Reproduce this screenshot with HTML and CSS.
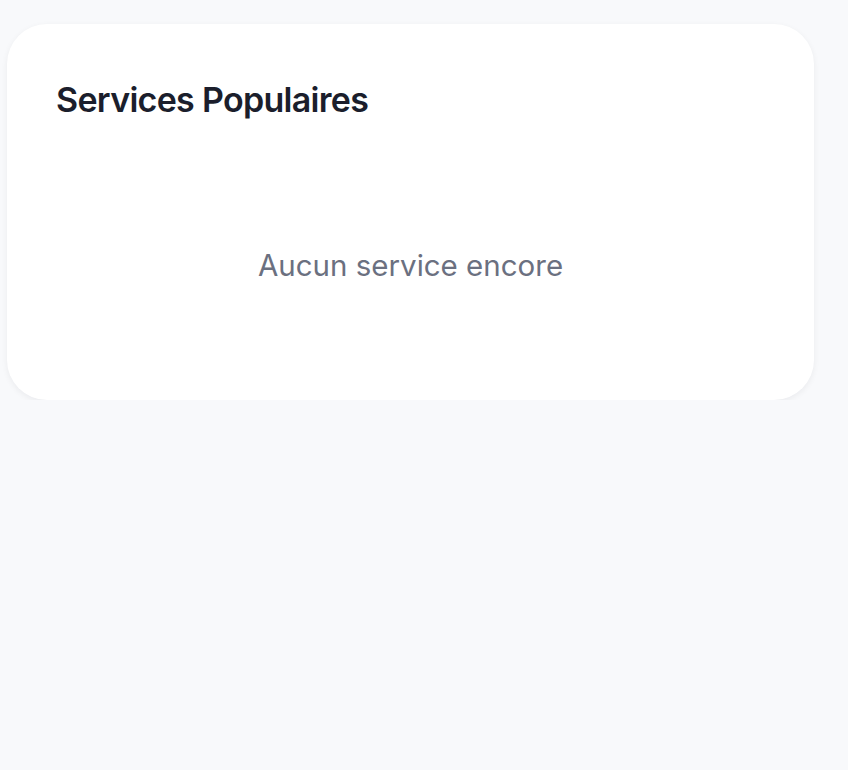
FILE: index.html
```html
<!DOCTYPE html>
<html lang="fr">
<head>
<meta charset="utf-8">
<link rel="stylesheet" href="styles.css">
</head>
<body>
<section class="card">
  <h2 class="card-title">Services Populaires</h2>
  <div class="empty">Aucun service encore</div>
</section>
</body>
</html>
```
FILE: styles.css
```css
html, body {
  margin: 0;
  padding: 0;
  background: #f8f9fb;
  font-family: Inter, "Noto Sans", sans-serif;
}
body {
  padding: 24px 34px 0 7px;
}
.card {
  background: #ffffff;
  border-radius: 40px;
  box-shadow: 0 2px 6px rgba(17, 24, 39, 0.06);
  height: 376px;
  box-sizing: border-box;
  padding: 48px 49px;
  display: flex;
  flex-direction: column;
}
.card-title {
  margin: 0;
  font-size: 34px;
  line-height: 56px;
  font-weight: 600;
  letter-spacing: -0.7px;
  color: #1b1e2c;
}
.empty {
  flex: 1;
  display: flex;
  align-items: center;
  justify-content: center;
  font-size: 29.5px;
  color: #6b7080;
  padding-top: 50px;
}
```
